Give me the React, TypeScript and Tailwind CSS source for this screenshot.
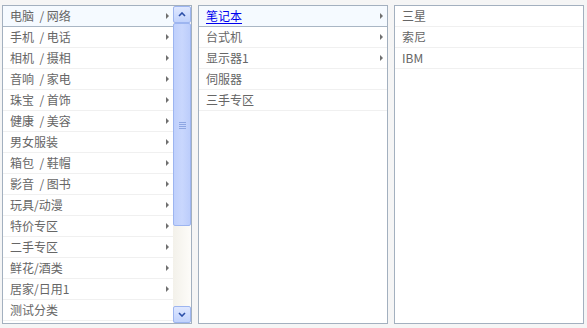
import React from 'react';

type Item = { label: string; more?: boolean };

const level1: Item[] = [
  { label: '电脑  / 网络', more: true },
  { label: '手机  / 电话', more: true },
  { label: '相机  / 摄相', more: true },
  { label: '音响  / 家电', more: true },
  { label: '珠宝  / 首饰', more: true },
  { label: '健康  / 美容', more: true },
  { label: '男女服装', more: true },
  { label: '箱包  / 鞋帽', more: true },
  { label: '影音  / 图书', more: true },
  { label: '玩具/动漫', more: true },
  { label: '特价专区', more: true },
  { label: '二手专区', more: true },
  { label: '鲜花/酒类', more: true },
  { label: '居家/日用1', more: true },
  { label: '测试分类' },
];

const level2: Item[] = [
  { label: '笔记本', more: true },
  { label: '台式机', more: true },
  { label: '显示器1', more: true },
  { label: '伺服器' },
  { label: '三手专区' },
];

const level3: Item[] = [{ label: '三星' }, { label: '索尼' }, { label: 'IBM' }];

function Arrow() {
  return (
    <svg width="3" height="6" viewBox="0 0 3 6" className="ml-auto shrink-0">
      <path d="M0 0 L3 3 L0 6 Z" fill="#6f6f6f" />
    </svg>
  );
}

function Row({ item, active, link }: { item: Item; active?: boolean; link?: boolean }) {
  return (
    <li
      className={
        'flex h-[21px] items-center pl-[7px] pr-[4px] ' +
        (active ? 'border-b border-[#a9b6c4] bg-[#f5faff]' : 'border-b border-[#f0f0f0]')
      }
    >
      <span
        className={
          'whitespace-pre text-[12px] leading-none ' +
          (link ? 'text-[#0000ee] underline underline-offset-2' : 'text-[#666]')
        }
      >
        {item.label}
      </span>
      {item.more && <Arrow />}
    </li>
  );
}

function ScrollBar() {
  return (
    <div className="flex w-[18px] shrink-0 flex-col bg-gradient-to-r from-[#f3f1ea] to-[#fdfcf9]">
      <div className="flex h-[17px] items-center justify-center rounded-[2px] border border-[#9db5f0] bg-gradient-to-b from-[#dfe8ff] to-[#c1d2fc]">
        <svg width="8" height="5" viewBox="0 0 8 5">
          <path d="M1 4 L4 1 L7 4" stroke="#2b4fa8" strokeWidth="1.6" fill="none" />
        </svg>
      </div>
      <div className="flex h-[203px] items-center justify-center rounded-[2px] border border-[#9db5f0] bg-gradient-to-r from-[#bfd0fc] via-[#c9d7fd] to-[#bccdfb]">
        <svg width="7" height="8" viewBox="0 0 7 8">
          <path d="M0 1.5 H7 M0 3.5 H7 M0 5.5 H7 M0 7.5 H7" stroke="#8ea6e2" strokeWidth="1" />
        </svg>
      </div>
      <div className="flex-1" />
      <div className="flex h-[17px] items-center justify-center rounded-[2px] border border-[#9db5f0] bg-gradient-to-b from-[#dfe8ff] to-[#c1d2fc]">
        <svg width="8" height="5" viewBox="0 0 8 5">
          <path d="M1 1 L4 4 L7 1" stroke="#2b4fa8" strokeWidth="1.6" fill="none" />
        </svg>
      </div>
    </div>
  );
}

function Panel({
  items,
  active,
  link,
  scroll,
}: {
  items: Item[];
  active?: number;
  link?: boolean;
  scroll?: boolean;
}) {
  return (
    <div className="flex h-[319px] w-[190px] border border-[#a3b0bf] bg-white">
      <ul className="flex-1 overflow-hidden">
        {items.map((it, i) => (
          <Row key={it.label} item={it} active={i === active} link={link && i === active} />
        ))}
      </ul>
      {scroll && <ScrollBar />}
    </div>
  );
}

export default function App() {
  return (
    <div
      className="flex h-[328px] w-[587px] gap-[6px] bg-[#f5f5f5] pl-[2px] pt-[5px]"
      style={{ fontFamily: '"Noto Sans CJK SC", "Liberation Sans", sans-serif' }}
    >
      <Panel items={level1} active={0} scroll />
      <Panel items={level2} active={0} link />
      <Panel items={level3} />
    </div>
  );
}
